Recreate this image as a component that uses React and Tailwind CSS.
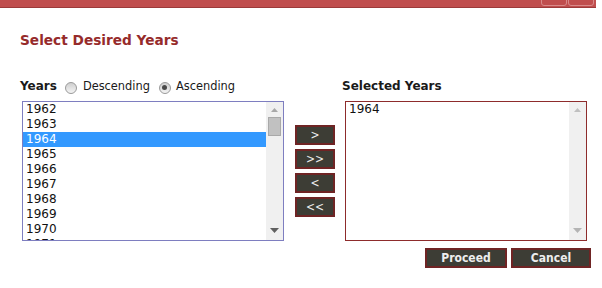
import React from "react";

const font = { fontFamily: '"DejaVu Sans", Verdana, sans-serif' };

function Radio({ checked }) {
  return (
    <span className="inline-flex h-[12px] w-[12px] items-center justify-center rounded-full border border-[#9a9a9a] bg-gradient-to-b from-[#cfcfcf] to-[#f4f4f4]">
      {checked && <span className="h-[5px] w-[5px] rounded-full bg-[#4a4a4a]" />}
    </span>
  );
}

function UpArrow({ color }) {
  return (
    <svg width="7" height="4" viewBox="0 0 7 4">
      <polygon points="0,4 7,4 3.5,0" fill={color} />
    </svg>
  );
}
function DownArrow({ color }) {
  return (
    <svg width="9" height="5" viewBox="0 0 9 5">
      <polygon points="0,0 9,0 4.5,5" fill={color} />
    </svg>
  );
}

function Btn({ children, w, bold }) {
  return (
    <div
      className={`${w} ${bold ? "font-bold" : "font-normal"} flex h-[20px] items-center justify-center border-2 border-[#6f2424] bg-[#3d3d35] text-[12px] text-[#ededed]`}
      style={{ fontFamily: '"DejaVu Sans Condensed", "DejaVu Sans", sans-serif' }}
    >
      {children}
    </div>
  );
}

export default function App() {
  const years = [1962, 1963, 1964, 1965, 1966, 1967, 1968, 1969, 1970, 1971];
  return (
    <div className="h-[288px] w-[602px] overflow-hidden bg-white" style={font}>
      <div className="flex h-[8px] w-[596px] justify-end border-b border-[#9c3a3a] bg-[#c04e4e] pr-[2px]">
        <div className="mt-[-4px] h-[10px] w-[26px] rounded-[3px] border border-[#d98a8a]" />
        <div className="ml-[1px] mt-[-4px] h-[10px] w-[26px] rounded-[3px] border border-[#d98a8a]" />
      </div>
      <div className="pl-[20px]">
        <div className="mt-[24px] h-[16px] text-[13.7px] font-bold leading-[16px] text-[#962b2b]">
          Select Desired Years
        </div>
        <div className="mt-[31px] flex">
          <div className="w-[264px]">
            <div className="flex h-[15px] items-center text-[12px] leading-[15px] text-[#1a1a1a]">
              <span className="font-bold">Years</span>
              <span className="ml-[8px] mt-[2px] flex"><Radio /></span>
              <span className="ml-[6px] text-[11.4px]">Descending</span>
              <span className="ml-[9px] mt-[2px] flex"><Radio checked /></span>
              <span className="ml-[5px] text-[11.4px]">Ascending</span>
            </div>
            <div className="ml-[2px] mt-[7px] flex h-[140px] w-[262px] border border-[#7e7ec0]">
              <div className="flex-1 overflow-hidden">
                {years.map((y) => (
                  <div
                    key={y}
                    className={`h-[15px] pl-[3px] text-[12px] leading-[15px] ${
                      y === 1964 ? "bg-[#3399ff] text-white" : "text-[#111]"
                    }`}
                  >
                    {y}
                  </div>
                ))}
              </div>
              <div className="flex w-[17px] flex-col items-center bg-[#f0f0f0]">
                <div className="mt-[6px] flex h-[4px] items-center">
                  <UpArrow color="#a8a8a8" />
                </div>
                <div className="mt-[5px] h-[19px] w-[13px] border border-[#a9a9a9] bg-[#c1c1c1]" />
                <div className="flex-1" />
                <div className="mb-[7px]">
                  <DownArrow color="#606060" />
                </div>
              </div>
            </div>
          </div>
          <div className="ml-[11px] mt-[46px] flex flex-col gap-[4px]">
            <Btn w="w-[40px]">&gt;</Btn>
            <Btn w="w-[40px]">&gt;&gt;</Btn>
            <Btn w="w-[40px]">&lt;</Btn>
            <Btn w="w-[40px]">&lt;&lt;</Btn>
          </div>
          <div className="ml-[7px]">
            <div className="h-[15px] text-[12px] font-bold leading-[15px] text-[#1a1a1a]">
              Selected Years
            </div>
            <div className="ml-[3px] mt-[7px] flex h-[140px] w-[242px] border border-[#8e2c2c]">
              <div className="flex-1 overflow-hidden">
                <div className="h-[15px] pl-[3px] text-[12px] leading-[15px] text-[#111]">1964</div>
              </div>
              <div className="flex w-[17px] flex-col items-center bg-[#f0f0f0]">
                <div className="mt-[6px] flex h-[4px] items-center">
                  <UpArrow color="#c0c0c0" />
                </div>
                <div className="flex-1" />
                <div className="mb-[7px]">
                  <DownArrow color="#b4b4b4" />
                </div>
              </div>
            </div>
          </div>
        </div>
        <div className="mt-[7px] flex justify-end gap-[4px] pr-[11px]">
          <Btn w="w-[82px]" bold>Proceed</Btn>
          <Btn w="w-[80px]" bold>Cancel</Btn>
        </div>
      </div>
    </div>
  );
}
